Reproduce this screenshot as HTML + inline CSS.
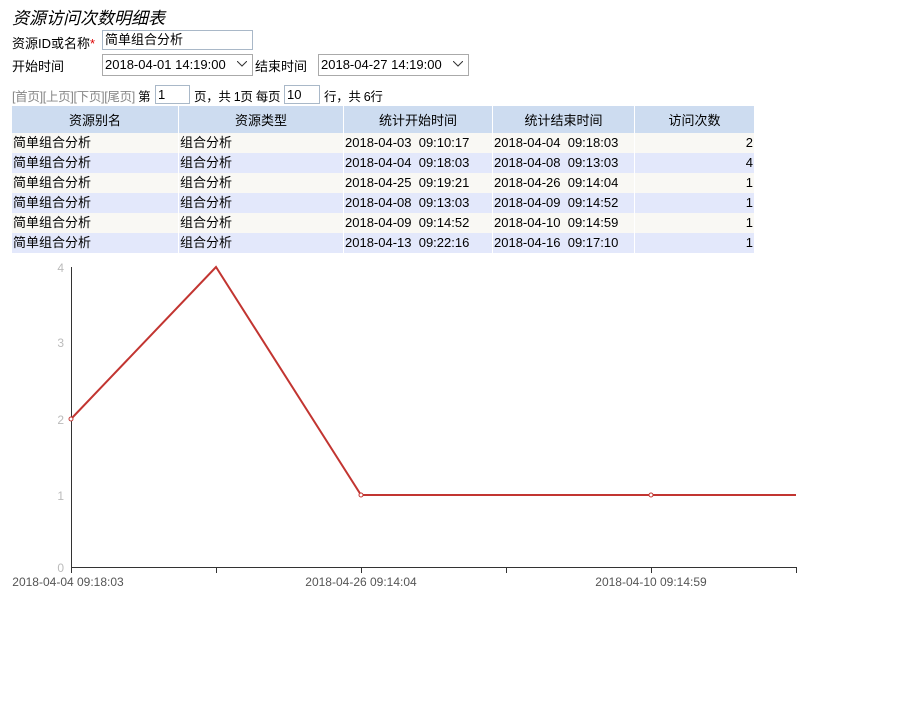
<!DOCTYPE html>
<html><head><meta charset="utf-8"><style>
body{margin:0;width:910px;height:707px;background:#fff;font-family:"Liberation Sans","Noto Sans CJK SC",sans-serif;font-size:13px;color:#000;position:relative;overflow:hidden}
.a{position:absolute;white-space:nowrap}
.inp{position:absolute;border:1px solid #a9b8c8;height:20px;box-sizing:border-box;background:#fff;font-size:13px;line-height:18px;padding-left:2px}
.sel{position:absolute;border:1px solid #aaa;height:22px;box-sizing:border-box;background:#fff;font-size:13px;line-height:20px;padding-left:2px}
.sel svg{position:absolute;right:5px;top:6px}
table{position:absolute;left:12px;top:106px;border-collapse:collapse;width:743px;font-size:13px}
th{background:#cddcf0;font-weight:normal;height:27px;border-right:1px solid #fff;padding:0}
td{height:20px;padding:0 1px;border-right:1px solid #fff;line-height:20px}
tr.o td{background:#f9f8f4}tr.e td{background:#e3e8fb}
</style></head><body>
<div class="a" style="left:12px;top:4px;font-size:17px;font-style:italic">资源访问次数明细表</div>
<div class="a" style="left:12px;top:33px">资源ID或名称<span style="color:#d00">*</span></div>
<div class="inp" style="left:102px;top:30px;width:151px">简单组合分析</div>
<div class="a" style="left:12px;top:56px">开始时间</div>
<div class="sel" style="left:102px;top:54px;width:151px">2018-04-01 14:19:00<svg width="10" height="6"><path d="M0 0L5 5L10 0" fill="none" stroke="#333"/></svg></div>
<div class="a" style="left:255px;top:56px">结束时间</div>
<div class="sel" style="left:318px;top:54px;width:151px">2018-04-27 14:19:00<svg width="10" height="6"><path d="M0 0L5 5L10 0" fill="none" stroke="#333"/></svg></div>
<div class="a" style="left:12px;top:86px;font-size:12.5px;letter-spacing:-0.3px"><span style="color:#888">[首页][上页][下页][尾页]</span> 第</div>
<div class="inp" style="left:155px;top:85px;width:35px;height:19px">1</div>
<div class="a" style="left:194px;top:86px;font-size:12.5px;letter-spacing:-0.3px">页，共 1页 每页</div>
<div class="inp" style="left:284px;top:85px;width:36px;height:19px">10</div>
<div class="a" style="left:324px;top:86px;font-size:12.5px;letter-spacing:-0.3px">行，共 6行</div>
<table>
<tr><th style="width:166px">资源别名</th><th style="width:164px">资源类型</th><th style="width:148px">统计开始时间</th><th style="width:141px">统计结束时间</th><th>访问次数</th></tr>
<tr class="o"><td>简单组合分析</td><td>组合分析</td><td>2018-04-03&nbsp; 09:10:17</td><td>2018-04-04&nbsp; 09:18:03</td><td style="text-align:right">2</td></tr>
<tr class="e"><td>简单组合分析</td><td>组合分析</td><td>2018-04-04&nbsp; 09:18:03</td><td>2018-04-08&nbsp; 09:13:03</td><td style="text-align:right">4</td></tr>
<tr class="o"><td>简单组合分析</td><td>组合分析</td><td>2018-04-25&nbsp; 09:19:21</td><td>2018-04-26&nbsp; 09:14:04</td><td style="text-align:right">1</td></tr>
<tr class="e"><td>简单组合分析</td><td>组合分析</td><td>2018-04-08&nbsp; 09:13:03</td><td>2018-04-09&nbsp; 09:14:52</td><td style="text-align:right">1</td></tr>
<tr class="o"><td>简单组合分析</td><td>组合分析</td><td>2018-04-09&nbsp; 09:14:52</td><td>2018-04-10&nbsp; 09:14:59</td><td style="text-align:right">1</td></tr>
<tr class="e"><td>简单组合分析</td><td>组合分析</td><td>2018-04-13&nbsp; 09:22:16</td><td>2018-04-16&nbsp; 09:17:10</td><td style="text-align:right">1</td></tr>
</table>
<svg class="a" style="left:0;top:0" width="910" height="707" font-family="Liberation Sans, sans-serif" font-size="12">
<g fill="#bbb" text-anchor="end"><text x="64" y="272">4</text><text x="64" y="347">3</text><text x="64" y="424">2</text><text x="64" y="500">1</text><text x="64" y="572">0</text></g>
<path d="M71.5 267V567.5H796.5" fill="none" stroke="#333"/>
<path d="M71.5 567v6M216.5 567v6M361.5 567v6M506.5 567v6M651.5 567v6M796.5 567v6" stroke="#333"/>
<g fill="#555" text-anchor="middle"><text x="68" y="586">2018-04-04 09:18:03</text><text x="361" y="586">2018-04-26 09:14:04</text><text x="651" y="586">2018-04-10 09:14:59</text></g>
<polyline points="71,419 216,267 361,495 506,495 651,495 796,495" fill="none" stroke="#c23531" stroke-width="2"/>
<g fill="#fff" stroke="#c23531"><circle cx="71" cy="419" r="2"/><circle cx="361" cy="495" r="2"/><circle cx="651" cy="495" r="2"/></g>
</svg>
</body></html>
